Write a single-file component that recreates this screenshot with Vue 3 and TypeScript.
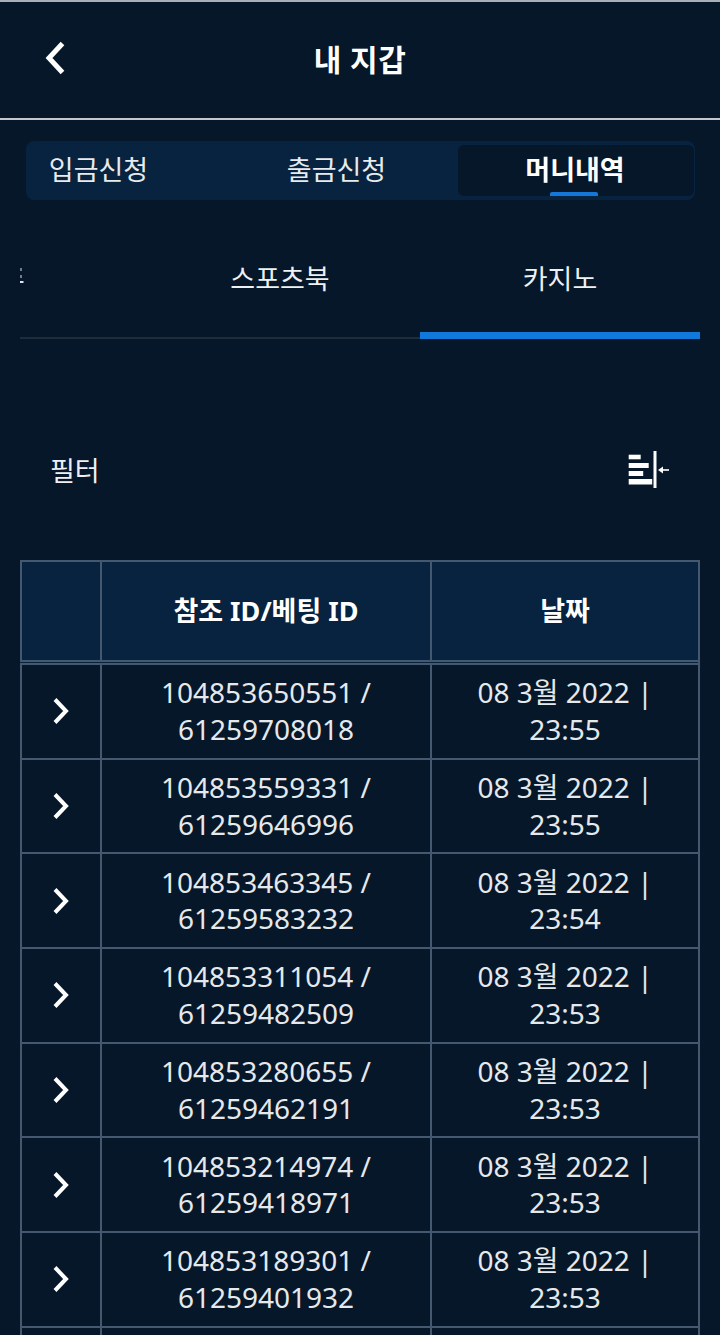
<script setup lang="ts">
interface Row { ref: string; bet: string; time: string }
const rows: Row[] = [
  { ref: '104853650551', bet: '61259708018', time: '23:55' },
  { ref: '104853559331', bet: '61259646996', time: '23:55' },
  { ref: '104853463345', bet: '61259583232', time: '23:54' },
  { ref: '104853311054', bet: '61259482509', time: '23:53' },
  { ref: '104853280655', bet: '61259462191', time: '23:53' },
  { ref: '104853214974', bet: '61259418971', time: '23:53' },
  { ref: '104853189301', bet: '61259401932', time: '23:53' },
  { ref: '', bet: '', time: '' },
]
</script>

<template>
  <div class="page">
    <header class="top">
      <svg class="back" width="24" height="36" viewBox="0 0 24 36"><path d="M18.5 3.5 L5 18 L18.5 32.5" fill="none" stroke="#fff" stroke-width="5" /></svg>
      <h1>내 지갑</h1>
    </header>

    <nav class="seg">
      <div class="seg-item first">입금신청</div>
      <div class="seg-item second">출금신청</div>
      <div class="seg-item active">머니내역</div>
    </nav>

    <nav class="tabs">
      <div class="clip">
        <svg width="4" height="16" viewBox="0 0 4 16">
          <g fill="#dfe4e9">
            <rect x="0.5" y="0" width="1" height="3" />
            <rect x="0.5" y="7" width="1" height="3" />
            <rect x="0" y="13" width="3.5" height="2" />
          </g>
        </svg>
      </div>
      <div class="tab">스포츠북</div>
      <div class="tab on">카지노</div>
    </nav>

    <section class="filter">
      <span>필터</span>
      <svg width="41" height="37" viewBox="0 0 41 37">
        <g fill="#fff">
          <rect x="0.7" y="3.7" width="12" height="4.6" />
          <rect x="0.7" y="12" width="20" height="5" />
          <rect x="0.7" y="20" width="14.5" height="5" />
          <rect x="0.7" y="28" width="23.5" height="5.5" />
          <rect x="25.5" y="0" width="3" height="37" />
          <rect x="33" y="18.2" width="8" height="1.6" />
          <path d="M30 19 L35 15.5 V22.5 Z" />
        </g>
      </svg>
    </section>

    <div class="table">
      <div class="line head">
        <div class="cell"></div>
        <div class="cell">참조 ID/베팅 ID</div>
        <div class="cell">날짜</div>
      </div>
      <div v-for="(r, i) in rows" :key="i" class="line">
        <div class="cell">
          <svg v-if="r.ref" width="18" height="28" viewBox="0 0 18 28"><path d="M3 2.5 L14 14 L3 25.5" fill="none" stroke="#fff" stroke-width="4" /></svg>
        </div>
        <div class="cell txt"><template v-if="r.ref">{{ r.ref }} /<br />{{ r.bet }}</template></div>
        <div class="cell txt"><template v-if="r.ref">08 3월 2022 |<br />{{ r.time }}</template></div>
      </div>
    </div>
  </div>
</template>

<style>
html, body { margin: 0; background: #051729; }
</style>

<style scoped>
.page {
  width: 720px;
  height: 1335px;
  overflow: hidden;
  background: #051729;
  color: #fff;
  font-family: "Noto Sans", "Noto Sans CJK KR", sans-serif;
  border-top: 2px solid #a9b0b8;
  box-sizing: border-box;
}
.top {
  height: 116px;
  border-bottom: 2px solid #c4c8cc;
  display: flex;
  align-items: center;
  justify-content: center;
  position: relative;
}
.back { position: absolute; left: 44px; top: 38px; }
h1 { margin: 0 0 1px; font-size: 30px; font-weight: 700; line-height: 40px; letter-spacing: .5px; }
.seg {
  margin: 21px 25px 0 26px;
  height: 59px;
  background: #08233f;
  border-radius: 8px;
  display: flex;
  padding: 4px 1px 4px 0;
  box-sizing: border-box;
  font-size: 27px;
}
.seg-item { display: flex; align-items: center; justify-content: center; line-height: 1; padding-bottom: 2px; color: #e8ebee; }
.first { width: 145px; }
.second { width: 287px; padding-left: 44px; box-sizing: border-box; }
.active {
  flex: 1;
  background: #051729;
  border-radius: 6px;
  font-weight: 700;
  color: #fff;
  position: relative;
  padding-right: 2px;
}
.active::after {
  content: "";
  position: absolute;
  left: 92px;
  bottom: 0;
  width: 48px;
  height: 4px;
  background: #1577d8;
  border-radius: 2px 2px 0 0;
}
.tabs {
  margin: 39px 20px 0;
  height: 100px;
  border-bottom: 2px solid #1e2c3b;
  box-sizing: border-box;
  display: flex;
  position: relative;
  font-size: 27px;
  color: #eef0f2;
}
.clip { width: 120px; padding-top: 16px; box-sizing: border-box; }
.tab { width: 280px; display: flex; justify-content: center; padding-top: 20px; line-height: 40px; }
.tab.on { position: relative; }
.tab.on::after {
  content: "";
  position: absolute;
  left: 0;
  right: 0;
  bottom: -2px;
  height: 7px;
  background: #1279dc;
}
.filter {
  margin: 100px 51px 0 50px;
  height: 60px;
  display: flex;
  justify-content: space-between;
  align-items: center;
  font-size: 27px;
  color: #eef0f2;
}
.table {
  margin: 61px 20px 0;
  border-top: 2px solid #445870;
  border-right: 2px solid #445870;
  width: 680px;
  box-sizing: border-box;
}
.line {
  display: grid;
  grid-template-columns: 80px 330px 1fr;
  height: 94.7px;
  box-sizing: border-box;
  border-bottom: 2px solid #445870;
  text-align: center;
  font-size: 28px;
  line-height: 36.5px;
  color: #e6e9ec;
}
.line.head {
  height: 103px;
  background: #08233f;
  font-weight: 700;
  font-size: 27px;
  color: #fff;
  border-bottom: 5px double #445870;
}
.cell {
  border-left: 2px solid #445870;
  display: flex;
  align-items: center;
  justify-content: center;
}
.txt { padding-bottom: 1px; box-sizing: border-box; }
</style>
